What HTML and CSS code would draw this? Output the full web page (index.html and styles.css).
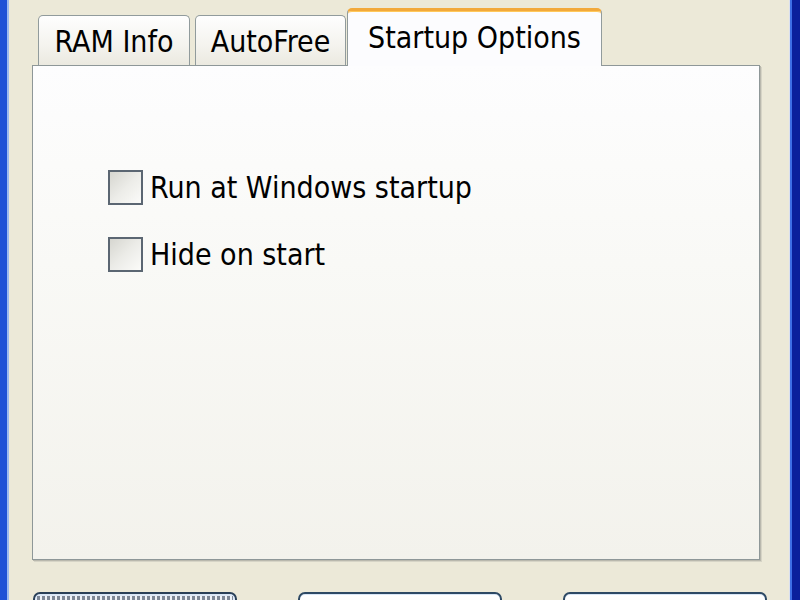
FILE: index.html
```html
<!DOCTYPE html>
<html lang="en">
<head>
    <meta charset="UTF-8">
    <title>RAM Optimizer - Options</title>
    <link rel="stylesheet" href="styles.css">
</head>
<body>

<div class="window">
    <div class="tabs">
        <div class="tab tab-ram">RAM Info</div>
        <div class="tab tab-auto">AutoFree</div>
        <div class="tab tab-startup active">Startup Options</div>
    </div>

    <div class="panel">
        <label class="check">
            <span class="box"></span>
            Run at Windows startup
        </label>
        <label class="check">
            <span class="box"></span>
            Hide on start
        </label>
    </div>

    <!-- only the top edge of the dialog buttons is in view -->
    <div class="buttons">
        <button class="btn default" aria-label="OK"></button>
        <button class="btn" aria-label="Cancel"></button>
        <button class="btn" aria-label="Apply"></button>
    </div>
</div>

</body>
</html>
```

FILE: styles.css
```css
html, body {
    margin: 0;
    height: 100%;
    overflow: hidden;
}
body {
    font-family: "DejaVu Sans", "Liberation Sans", sans-serif;
    font-stretch: condensed;
    font-size: 30px;
    color: #000;
}
.window {
    height: 600px;
    box-sizing: border-box;
    padding: 8px 30px 0 32px;
    background:
        linear-gradient(to right, #1f52d6 0 7px, #9dbbf0 7px 9px, transparent 9px),
        linear-gradient(to left, #0a209c 0 8px, #3d6fe6 8px 10px, #d9dff0 10px 11px, transparent 11px),
        #ece9d8;
}

/* tab strip */
.tabs {
    display: flex;
    align-items: flex-end;
    height: 57px;
    padding-left: 6px;
}
.tab {
    box-sizing: border-box;
    height: 50px;
    padding-top: 11px;
    line-height: 30px;
    text-align: center;
    white-space: nowrap;
    border: 1px solid #919b9c;
    border-bottom: none;
    border-radius: 5px 5px 0 0;
    background: linear-gradient(to bottom, #fefefe, #f4f3ee 60%, #ebe9e0);
}
.tab-ram {
    width: 152px;
    margin-right: 5px;
}
.tab-auto {
    width: 151px;
}
.tab-startup {
    width: 255px;
    margin-left: 1px;
}
.tab.active {
    position: relative;
    z-index: 1;
    height: 58px;
    margin-bottom: -1px;
    padding-top: 12px;
    border-top: 3px solid #f2a93b;
    box-shadow: inset 0 1px 0 #ffc85a;
    background: #fcfcfe;
}

/* page body */
.panel {
    box-sizing: border-box;
    width: 728px;
    height: 495px;
    padding: 104px 0 0 75px;
    display: flex;
    flex-direction: column;
    gap: 32px;
    border: 1px solid #8e9798;
    box-shadow: 1px 1px 0 #b9b8ad, 2px 2px 0 #d6d4c6;
    background: linear-gradient(to bottom, #fdfdfe, #f9f9f6 40%, #f3f2ec);
}
.check {
    display: flex;
    align-items: center;
    gap: 7px;
    line-height: 30px;
}
.box {
    box-sizing: border-box;
    width: 35px;
    height: 35px;
    border: 2px solid #5b6672;
    background: linear-gradient(135deg, #d6d6d0, #ecece8 50%, #fbfbf9);
}

/* dialog buttons */
.buttons {
    display: flex;
    justify-content: space-between;
    margin: 32px 3px 0 1px;
}
.btn {
    width: 204px;
    height: 46px;
    border: 2px solid #2d4964;
    border-radius: 7px;
    background: linear-gradient(to bottom, #ffffff, #f3f3ef);
    box-shadow: inset 0 1px 0 #d8e6f7;
}
.btn.default {
    border-color: #2a4058;
    background:
        repeating-linear-gradient(90deg, #7e8897 0 3px, #eef2f8 3px 5px) 2px 2px / calc(100% - 4px) 7px no-repeat,
        linear-gradient(to bottom, #dfe9f8, #ffffff);
}
```
